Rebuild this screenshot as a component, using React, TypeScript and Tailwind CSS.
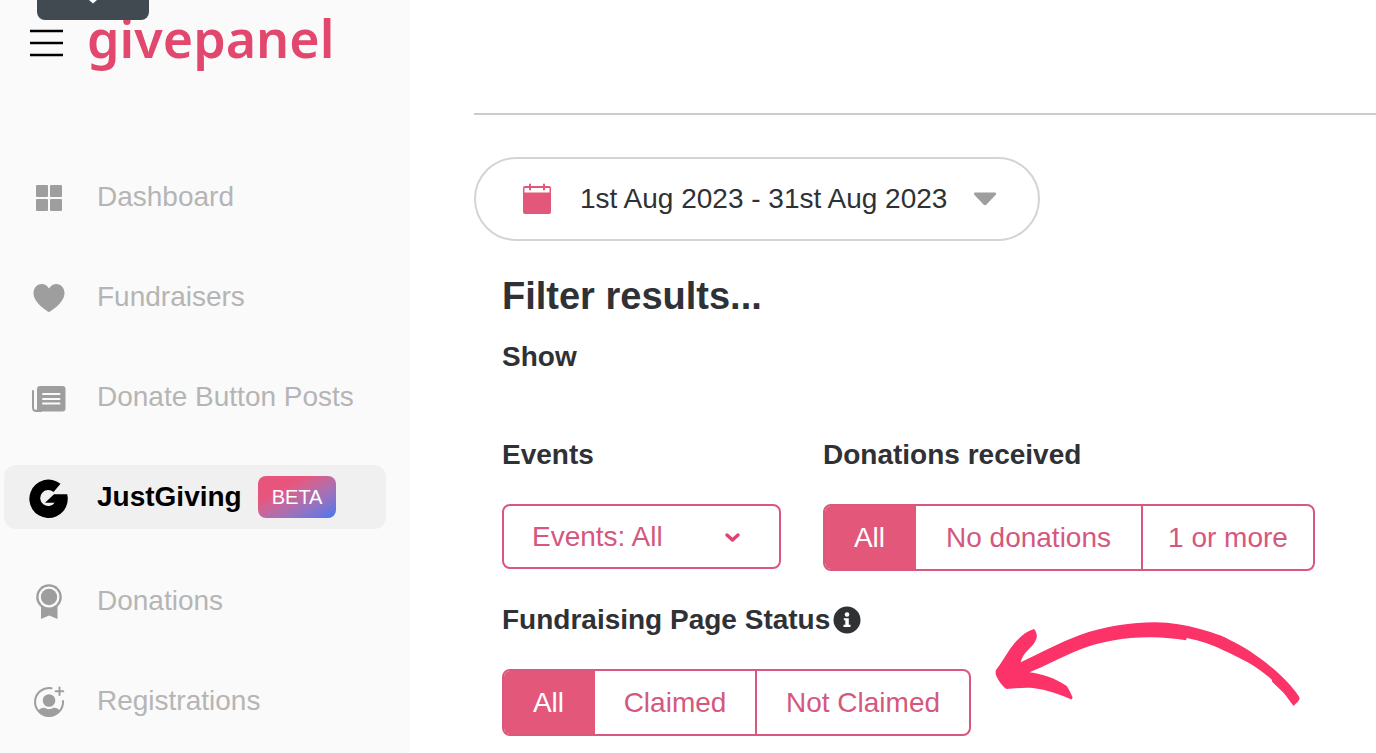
import { useState } from "react";
import type { ReactNode } from "react";

type NavItem = {
  label: string;
  icon: ReactNode;
  active?: boolean;
  badge?: string;
};

type Option = {
  label: string;
  width: string;
};

const DashboardIcon = () => (
  <svg width="40" height="40" viewBox="0 0 40 40" fill="currentColor">
    <rect x="7" y="8" width="12" height="12" rx="1" />
    <rect x="21" y="8" width="12" height="12" rx="1" />
    <rect x="7" y="22" width="12" height="12" rx="1" />
    <rect x="21" y="22" width="12" height="12" rx="1" />
  </svg>
);

const HeartIcon = () => (
  <svg width="40" height="40" viewBox="0 0 40 40" fill="currentColor">
    <path d="M20 35C17 33.500 4.500 25.500 4.500 16C4.500 11 8 7 12.500 7C16 7 18.500 8.800 20 11.500C21.500 8.800 24 7 27.500 7C32 7 35.500 11 35.500 16C35.500 25.500 23 33.500 20 35Z" />
  </svg>
);

const PostsIcon = () => (
  <svg width="40" height="40" viewBox="0 0 40 40" fill="none">
    <path
      d="M4 14V30.500Q4 34 7.500 34H12"
      stroke="currentColor"
      strokeWidth="2"
      strokeLinecap="round"
    />
    <path
      d="M11 9H33.500A3 3 0 0 1 36.500 12V31.500A3 3 0 0 1 33.500 34.500H6.500Q8 33.500 8 31V12A3 3 0 0 1 11 9Z"
      fill="currentColor"
    />
    <path
      d="M14 17H30.500M14 22H30.500M14 26.500H30.500"
      stroke="#fafafa"
      strokeWidth="2"
      strokeLinecap="round"
    />
  </svg>
);

const JustGivingIcon = () => (
  <svg
    className="overflow-visible"
    width="40"
    height="40"
    viewBox="0 0 40 40"
    fill="currentColor"
  >
    <path d="M31.500 6.800A19.200 19.200 0 1 0 38.200 17.300H25L16 25.700H25.700A8 8 0 1 1 24.500 15Z" />
  </svg>
);

const RosetteIcon = () => (
  <svg width="40" height="40" viewBox="0 0 40 40" fill="currentColor">
    <path d="M12 24H28.500V38L20.200 34.500L12 38Z" />
    <circle cx="20" cy="16" r="12.800" />
    <circle cx="20" cy="16" r="10.500" fill="#fafafa" />
    <circle cx="20" cy="16" r="8.200" />
  </svg>
);

const RegistrationIcon = () => (
  <svg width="40" height="40" viewBox="0 0 40 40" fill="none">
    <path
      d="M22.500 7.200A14 14 0 1 0 34 20"
      stroke="currentColor"
      strokeWidth="2"
      strokeLinecap="round"
    />
    <circle cx="20" cy="19.500" r="6.300" fill="currentColor" />
    <path
      d="M9 29.500Q12.500 26 15.500 26.800Q20 29.500 24.500 26.800Q28 26 31 29.500Q26.500 35.500 20 35.500Q13.500 35.500 9 29.500Z"
      fill="currentColor"
    />
    <path
      d="M30.500 6.500V14M26.700 10.200H34.300"
      stroke="currentColor"
      strokeWidth="2"
      strokeLinecap="round"
    />
  </svg>
);

const CalendarIcon = () => (
  <svg width="30" height="32" viewBox="0 0 30 32" fill="none">
    <path
      fillRule="evenodd"
      d="M3 3H27Q29 3 29 5V29Q29 31 27 31H3Q1 31 1 29V5Q1 3 3 3ZM2.500 5V9.500H27.500V5Z"
      fill="#e2577a"
    />
    <path
      d="M8 1.500V6.500M22 1.500V6.500"
      stroke="#e2577a"
      strokeWidth="2"
      strokeLinecap="round"
    />
  </svg>
);

const InfoIcon = () => (
  <svg width="28" height="28" viewBox="0 0 28 28">
    <circle cx="14" cy="14" r="13.500" fill="#2f3134" />
    <circle cx="14" cy="8.500" r="2.300" fill="#fff" />
    <path d="M10.800 12.200H15.800V18.800H17.500V21H10.500V18.800H12.300V14.300H10.800Z" fill="#fff" />
  </svg>
);

const ArrowMark = () => (
  <svg
    className="pointer-events-none absolute top-3 left-[488px]"
    width="320"
    height="100"
    viewBox="990 614 320 100"
    fill="#fb3369"
    aria-hidden="true"
  >
    <path d="M995.700 671C996 669.500 998 667.500 1000 664.500L1010 649C1018 638 1026 631 1034 629C1036 631 1037 634 1036.800 637C1036 642 1032 646 1028 650C1024 654 1021.500 658 1020.700 662.300C1040 653 1060 642.500 1080 635C1105 626 1132 622.300 1155 622.300C1171 622.500 1186 625 1200 629C1207 631 1214 633 1220 635.300C1227 638.300 1234 642 1240 645.300C1247 649.300 1254 653.800 1260 658.300C1267 663.500 1274 669 1280 674.700C1285 679.300 1289.500 684 1293.300 689C1296 692 1298.500 695.500 1299.700 698.300C1299 701 1296.500 703 1293.700 706C1290 702 1287.500 697 1283.300 692.500L1272.300 682L1271.700 679.500C1268 676 1264 673 1260 670.200C1255 666.500 1249 663 1243.300 660C1237 656.500 1230 653 1223.300 650.200C1216 646.500 1208 643.500 1200 641.200C1196 640 1191 639 1186.700 638L1186 640.200C1174 638.500 1162 637 1150 637.200C1126 637 1100 641.500 1080 649.500C1062 657 1045 666 1029.500 672.300C1042 674 1055 678 1066.700 686C1069.500 690 1071 694 1072.700 697.500L1071.500 699.500C1060 694 1047 690 1033 688C1024 687 1015 688.500 1006.500 689C1002 686 998 680 995.700 674.500Z" />
  </svg>
);

const mainLinks: NavItem[] = [
  { label: "Dashboard", icon: <DashboardIcon /> },
  { label: "Fundraisers", icon: <HeartIcon /> },
  { label: "Donate Button Posts", icon: <PostsIcon /> },
  { label: "JustGiving", icon: <JustGivingIcon />, active: true, badge: "BETA" },
];

const moreLinks: NavItem[] = [
  { label: "Donations", icon: <RosetteIcon /> },
  { label: "Registrations", icon: <RegistrationIcon /> },
];

const donationOptions: Option[] = [
  { label: "All", width: "w-[91px]" },
  { label: "No donations", width: "w-[227px]" },
  { label: "1 or more", width: "w-[170px]" },
];

const statusOptions: Option[] = [
  { label: "All", width: "w-[91px]" },
  { label: "Claimed", width: "w-[162px]" },
  { label: "Not Claimed", width: "w-[212px]" },
];

const NavList = ({ items }: { items: NavItem[] }) => (
  <ul className="flex flex-col gap-9">
    {items.map((item) => (
      <li key={item.label}>
        <a
          href="#"
          className={
            item.active
              ? "flex h-16 items-center rounded-xl bg-[#f0f0f0] pl-[25px] font-bold text-black"
              : "flex h-16 items-center rounded-xl pl-[25px] text-[#b5b5b5]"
          }
        >
          <span className={item.active ? "mr-7 text-black" : "mr-7 text-[#9e9e9e]"}>
            {item.icon}
          </span>
          {item.label}
          {item.badge && (
            <span className="ml-4 rounded-lg bg-linear-to-br from-[#e8557c] from-30% to-[#3f74f0] px-[14px] py-1 text-xl leading-[34px] font-normal text-white">
              {item.badge}
            </span>
          )}
        </a>
      </li>
    ))}
  </ul>
);

const ButtonGroup = ({ label, options }: { label: string; options: Option[] }) => {
  const [selected, setSelected] = useState("All");

  return (
    <div
      role="group"
      aria-label={label}
      className="flex h-[67px] w-fit overflow-hidden rounded-lg border-2 border-[#d9587d]"
    >
      {options.map((option) => (
        <button
          key={option.label}
          type="button"
          aria-pressed={selected === option.label}
          onClick={() => setSelected(option.label)}
          className={`${option.width} border-r-2 last:border-r-0 ${
            selected === option.label
              ? "border-[#e2577a] bg-[#e2577a] text-white"
              : "border-[#d9587d] text-[#d4587e]"
          }`}
        >
          {option.label}
        </button>
      ))}
    </div>
  );
};

const Sidebar = () => (
  <aside className="relative w-[410px] shrink-0 bg-[#fafafa]">
    <div className="absolute top-0 left-[37px] z-10 flex h-5 w-28 justify-center rounded-b-lg bg-[#414a50]">
      <svg width="16" height="4" viewBox="0 0 16 4">
        <path d="M4 0L8 3.500L12 0Z" fill="#fff" />
      </svg>
    </div>
    <div className="flex h-[86px] items-center gap-6 pl-[30px]">
      <button type="button" aria-label="Menu">
        <svg width="33" height="28" viewBox="0 0 33 28">
          <path d="M0 2H33M0 14H33M0 26H33" stroke="#000" strokeWidth="2.400" />
        </svg>
      </button>
      <a
        href="#"
        className="pb-2.5 font-['Noto_Sans','Open_Sans',sans-serif] text-[52px] leading-[72px] font-semibold text-[#e2476d]"
      >
        givepanel
      </a>
    </div>
    <nav className="mt-[79px] mr-6 ml-1 flex flex-col gap-10">
      <NavList items={mainLinks} />
      <NavList items={moreLinks} />
    </nav>
  </aside>
);

const App = () => (
  <div className="flex min-h-screen bg-white font-['Liberation_Sans',Arial,sans-serif] text-[28px] leading-9 text-[#2f3134]">
    <Sidebar />
    <main className="min-w-0 flex-1 pl-16">
      <header className="h-[115px] border-b-2 border-[#cccccc]" />
      <button
        type="button"
        className="mt-[42px] flex h-[84px] items-center rounded-full border-2 border-[#d4d4d4] pr-[41px] pl-[46px]"
      >
        <CalendarIcon />
        <span className="mr-[26px] ml-7">1st Aug 2023 - 31st Aug 2023</span>
        <svg width="24" height="14" viewBox="0 0 24 14">
          <path
            d="M2 0.500H22Q24 1 22.500 3L13.500 12.500Q12 14 10.500 12.500L1.500 3Q0 1 2 0.500Z"
            fill="#9e9e9e"
          />
        </svg>
      </button>

      <section className="mt-[33px] pl-7">
        <h2 className="text-[38px] leading-[44px] font-bold">Filter results...</h2>
        <h3 className="mt-[21px] font-bold">Show</h3>

        <div className="mt-[62px] flex gap-[42px]">
          <div className="flex w-[279px] flex-col gap-[31px]">
            <label htmlFor="events" className="font-bold">
              Events
            </label>
            <div className="relative">
              <select
                id="events"
                className="h-[65px] w-full appearance-none rounded-lg border-2 border-[#d9587d] bg-white pl-7 text-[#d4587e]"
              >
                <option>Events: All</option>
              </select>
              <svg
                className="pointer-events-none absolute top-7 right-10"
                width="17"
                height="12"
                viewBox="0 0 17 12"
                fill="none"
              >
                <path
                  d="M3 3L8.500 8L14 3"
                  stroke="#e0436f"
                  strokeWidth="3.500"
                  strokeLinecap="round"
                  strokeLinejoin="round"
                />
              </svg>
            </div>
          </div>
          <div className="flex flex-col gap-[31px]">
            <h3 className="font-bold">Donations received</h3>
            <ButtonGroup label="Donations received" options={donationOptions} />
          </div>
        </div>

        <div className="relative mt-[31px] flex flex-col gap-[31px]">
          <h3 className="flex items-center gap-[3px] font-bold">
            Fundraising Page Status
            <InfoIcon />
          </h3>
          <ButtonGroup label="Fundraising Page Status" options={statusOptions} />
          <ArrowMark />
        </div>
      </section>
    </main>
  </div>
);

export default App;
